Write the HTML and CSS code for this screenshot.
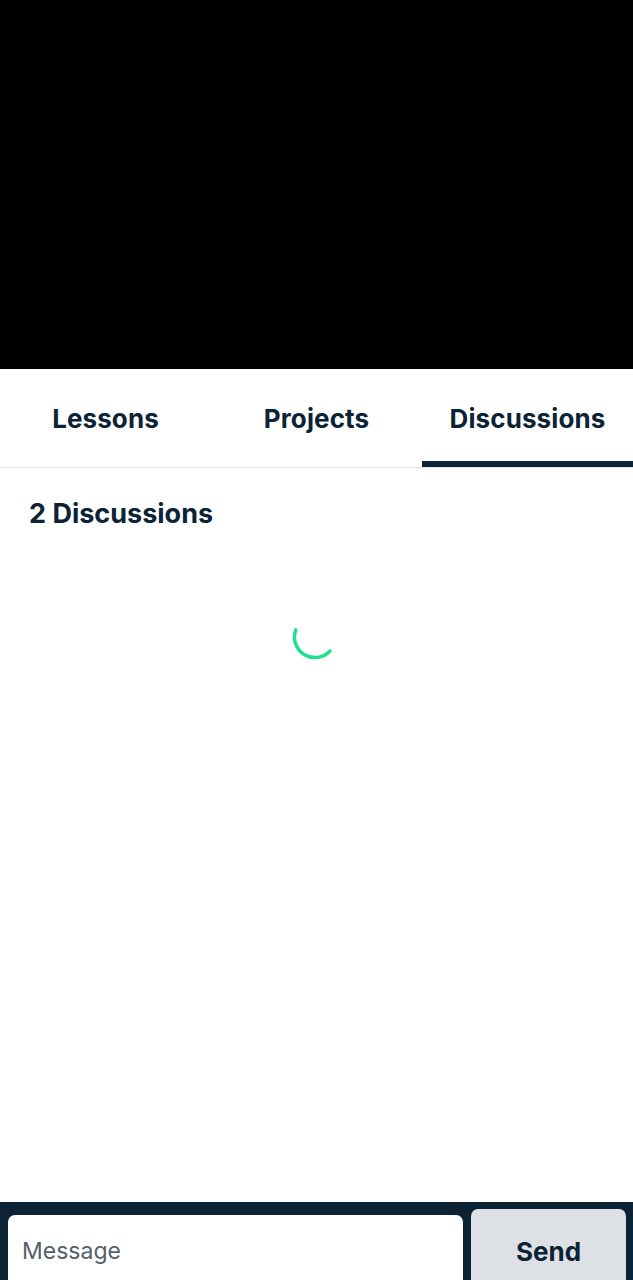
FILE: index.html
```html
<!DOCTYPE html>
<html>
<head>
<meta charset="utf-8">
<link rel="stylesheet" href="styles.css">
</head>
<body>
<div class="app">
  <div class="video"></div>
  <nav class="tabs">
    <div class="tab">Lessons</div>
    <div class="tab">Projects</div>
    <div class="tab active">Discussions</div>
  </nav>
  <main class="content">
    <h2 class="count">2 Discussions</h2>
    <div class="loader">
      <svg width="48" height="48" viewBox="0 0 48 48">
        <path d="M4.8 16.8 A20.5 20.5 0 0 0 39 38" fill="none" stroke="#1fe08c" stroke-width="3.5" stroke-linecap="round"/>
      </svg>
    </div>
  </main>
  <footer class="composer">
    <div class="input">Message</div>
    <button class="send">Send</button>
  </footer>
</div>
</body>
</html>
```
FILE: styles.css
```css
html, body { margin: 0; padding: 0; background: #fff; }
body { font-family: Inter, "Liberation Sans", sans-serif; color: #0b2335; }
.app { height: 1280px; display: flex; flex-direction: column; overflow: hidden; }
.video { height: 369px; background: #000; flex: none; }
.tabs { display: flex; height: 98px; border-bottom: 1px solid #e6e6e6; flex: none; }
.tab { flex: 1; display: flex; align-items: center; justify-content: center; font-size: 26px; font-weight: 700; letter-spacing: 0.1px; border-bottom: 6px solid transparent; padding-top: 6px; }
.tab.active { border-bottom-color: #0b2335; }
.content { flex: 1; padding: 29px 29px 0; }
.count { margin: 0; font-size: 27px; font-weight: 700; line-height: 34px; }
.loader { display: flex; justify-content: center; margin-top: 82px; padding-right: 4px; }
.composer { flex: none; height: 78px; box-sizing: border-box; background: #0b2335; display: flex; align-items: flex-start; gap: 8px; padding: 7px 7px 0 8px; }
.input { flex: none; width: 455px; margin-top: 6px; height: 80px; background: #fff; border-radius: 7px; font-size: 23px; color: #55606a; padding: 22px 14px 0; box-sizing: border-box; }
.send { flex: 1; height: 80px; border: none; border-radius: 7px; background: #dde0e4; font-family: inherit; font-size: 26px; font-weight: 700; color: #0b2335; padding: 4px 0 0; }
```
